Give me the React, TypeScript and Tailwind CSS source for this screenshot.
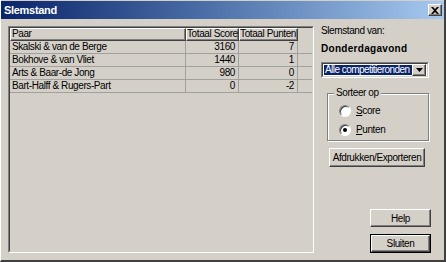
import React from 'react';

const rows = [
  { paar: 'Skalski & van de Berge', score: '3160', punten: '7' },
  { paar: 'Bokhove & van Vliet', score: '1440', punten: '1' },
  { paar: 'Arts & Baar-de Jong', score: '980', punten: '0' },
  { paar: 'Bart-Halff & Rugers-Part', score: '0', punten: '-2' },
];

const raised =
  'border border-t-white border-l-white border-b-[#404040] border-r-[#404040] shadow-[inset_-1px_-1px_#808080]';

const Radio = ({ checked, label }: { checked?: boolean; label: React.ReactNode }) => (
  <div className="flex items-center gap-[5px] h-[13px]">
    <div className="w-[12px] h-[12px] rounded-full bg-white border border-t-[#808080] border-l-[#808080] border-b-white border-r-white shadow-[inset_1px_1px_#404040] flex items-center justify-center">
      {checked && <div className="w-[4px] h-[4px] rounded-full bg-black" />}
    </div>
    <span>{label}</span>
  </div>
);

const Button = ({ children, isDefault, className }: { children: React.ReactNode; isDefault?: boolean; className?: string }) => (
  <div className={`${isDefault ? 'border border-black' : ''} ${className ?? ''}`}>
    <div className={`${raised} h-full w-full flex items-center justify-center bg-[#d4d0c8] whitespace-nowrap`}>{children}</div>
  </div>
);

export default function App() {
  return (
    <div
      className="w-[446px] h-[262px] bg-[#d4d0c8] flex flex-col text-[10px] tracking-[-0.4px] text-black border-r-2 border-b-2 border-r-[#404040] border-b-[#404040] border-l border-l-white"
      style={{ fontFamily: '"Liberation Sans", Arial, sans-serif' }}
    >
      <div className="h-[18px] mt-[1px] bg-linear-to-r from-[#0a246a] to-[#a6caf0] flex items-center justify-between pl-[3px] pr-[2px]">
        <span className="text-white font-bold text-[11px] tracking-[-0.3px]">Slemstand</span>
        <div className={`${raised} w-[14px] h-[12px] bg-[#d4d0c8] flex items-center justify-center`}>
          <svg width="8" height="7" viewBox="0 0 8 7">
            <path d="M0 0h2l2 2 2-2h2L5 3.5 8 7H6L4 5 2 7H0l3-3.5z" fill="black" />
          </svg>
        </div>
      </div>

      <div className="flex flex-1 pt-[7px] pl-[7px] pb-[6px]">
        <div className="w-[306px] h-[227px] border border-t-[#808080] border-l-[#808080] border-b-white border-r-white">
          <div className="w-full h-full border border-t-[#404040] border-l-[#404040] border-b-[#d4d0c8] border-r-[#d4d0c8] bg-[#d4d0c8]">
            <div className="flex h-[13px] leading-[10px] whitespace-nowrap">
              <div className={`${raised} w-[176px] pl-[1px]`}>Paar</div>
              <div className={`${raised} w-[53px] text-right pr-[1px] overflow-hidden`}>Totaal Score</div>
              <div className={`${raised} w-[59px] text-right pr-[1px] overflow-hidden`}>Totaal Punten</div>
            </div>
            {rows.map((r) => (
              <div key={r.paar} className="flex h-[13px] leading-[12px] border-b border-b-[#a0a0a0] whitespace-nowrap">
                <div className="w-[176px] pl-[2px] border-r border-r-[#a0a0a0]">{r.paar}</div>
                <div className="w-[53px] text-right pr-[3px] border-r border-r-[#a0a0a0]">{r.score}</div>
                <div className="w-[59px] text-right pr-[3px] border-r border-r-[#a0a0a0]">{r.punten}</div>
              </div>
            ))}
          </div>
        </div>

        <div className="flex flex-col ml-[7px] w-[110px]">
          <div className="mt-[-3px]">Slemstand van:</div>
          <div className="font-bold mt-[3px] tracking-[0.3px]">Donderdagavond</div>
          <div className="mt-[6px] w-[108px] h-[16px] border border-t-[#808080] border-l-[#808080] border-b-white border-r-white">
            <div className="h-full flex bg-white border border-t-[#404040] border-l-[#404040] border-b-[#d4d0c8] border-r-[#d4d0c8] px-[1px]">
              <div className="flex-1 my-[1px] bg-[#0a246a] text-[#ffffff] leading-[10px] pl-[1px] tracking-[-0.55px] whitespace-nowrap overflow-hidden">
                Alle competitieronden
              </div>
              <div className={`${raised} w-[14px] bg-[#d4d0c8] flex items-center justify-center`}>
                <svg width="7" height="4" viewBox="0 0 7 4">
                  <path d="M0 0h7L3.5 4z" fill="black" />
                </svg>
              </div>
            </div>
          </div>

          <div className="relative mt-[15px] ml-[6px] w-[102px] h-[48px] border border-[#808080] shadow-[1px_1px_white,inset_1px_1px_white]">
            <span className="absolute -top-[8px] left-[6px] bg-[#d4d0c8] px-[2px] leading-[14px]">Sorteer op</span>
            <div className="flex flex-col gap-[6px] pt-[10px] pl-[11px]">
              <Radio label={<><span className="underline">S</span>core</>} />
              <Radio checked label={<><span className="underline">P</span>unten</>} />
            </div>
          </div>

          <Button className="mt-[7px] ml-[8px] w-[96px] h-[19px]">Afdrukken/Exporteren</Button>

          <div className="flex-1" />
          <Button className="ml-[49px] w-[61px] h-[18px] mb-[7px]">Help</Button>
          <Button isDefault className="ml-[49px] w-[61px] h-[19px] mb-[1px]">Sluiten</Button>
        </div>
      </div>
    </div>
  );
}
